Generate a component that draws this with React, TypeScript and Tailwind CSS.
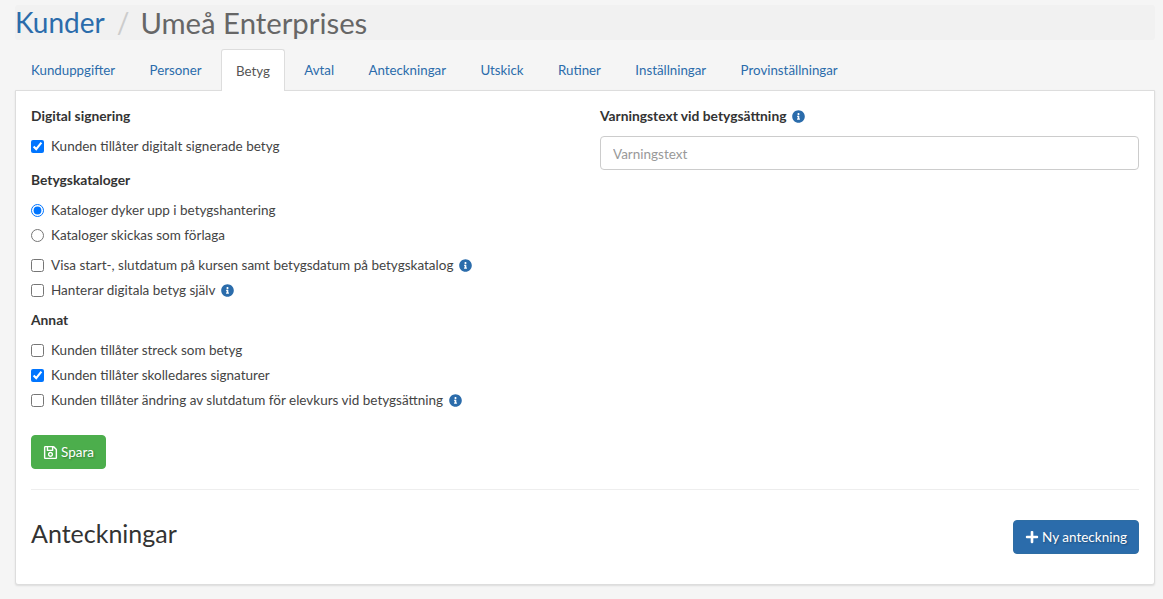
import { FaInfoCircle, FaPlus, FaRegSave } from 'react-icons/fa'

const tabs = ['Kunduppgifter', 'Personer', 'Betyg', 'Avtal', 'Anteckningar', 'Utskick', 'Rutiner', 'Inställningar', 'Provinställningar']

function Info() {
  return <FaInfoCircle className="ml-[6px] inline-block text-[13px] text-[#2b6cab]" />
}

function Check({ label, checked, info, className = '' }: { label: string; checked?: boolean; info?: boolean; className?: string }) {
  return (
    <label className={`flex h-[25px] items-center ${className}`}>
      <input type="checkbox" defaultChecked={checked} className="mr-[7px] h-[13px] w-[13px]" />
      <span>{label}</span>
      {info && <Info />}
    </label>
  )
}

function Radio({ label, checked }: { label: string; checked?: boolean }) {
  return (
    <label className="flex h-[25px] items-center">
      <input type="radio" name="kataloger" defaultChecked={checked} className="mr-[7px] h-[13px] w-[13px]" />
      <span>{label}</span>
    </label>
  )
}

function Heading({ children, className = '' }: { children: string; className?: string }) {
  return <h4 className={`text-[13.8px] leading-[20px] font-bold text-[#333] ${className}`}>{children}</h4>
}

export default function App() {
  return (
    <div className="min-h-[599px] bg-[#f5f5f5] pr-[8px] pl-[15px] pt-[5px] font-['Lato','Liberation_Sans',sans-serif] text-[13.5px] text-[#444]">
      <div className="flex h-[35px] items-center rounded-[3px] bg-[#f1f1f1] leading-[35px]">
        <a className="text-[28px] text-[#2b6cab]">Kunder</a>
        <span className="pr-[11px] pl-[12px] text-[28px] text-[#ccc]">/</span>
        <span className="text-[29.3px] text-[#666]">Umeå Enterprises</span>
      </div>
      <div className="mt-[9px] flex h-[42px] items-stretch gap-[4.4px] pl-px text-[13.3px]">
        {tabs.map(t => (
          <a
            key={t}
            className={t === 'Betyg'
              ? 'relative z-10 flex h-[42px] items-center rounded-t-[3px] border border-b-0 border-[#ddd] bg-white px-[14px] pt-[2px] text-[#555]'
              : 'flex items-center border border-transparent px-[14px] pt-[2px] text-[#2b6cab]'}
          >
            {t}
          </a>
        ))}
      </div>
      <div className="-mt-px h-[495px] rounded-b-[3px] border border-[#ddd] bg-white pr-[15px] pl-[15px] pt-[15px] shadow-[0_1px_2px_rgba(0,0,0,0.1)]">
        <div className="grid grid-cols-2 gap-x-[30px]">
          <div>
            <Heading>Digital signering</Heading>
            <Check className="mt-[8px]" label="Kunden tillåter digitalt signerade betyg" checked />
            <Heading className="mt-[11px]">Betygskataloger</Heading>
            <div className="mt-[8px]">
              <Radio label="Kataloger dyker upp i betygshantering" checked />
              <Radio label="Kataloger skickas som förlaga" />
            </div>
            <div className="mt-[5px]">
              <Check label="Visa start-, slutdatum på kursen samt betygsdatum på betygskatalog" info />
              <Check label="Hanterar digitala betyg själv" info />
            </div>
            <Heading className="mt-[7px]">Annat</Heading>
            <div className="mt-[8px]">
              <Check label="Kunden tillåter streck som betyg" />
              <Check label="Kunden tillåter skolledares signaturer" checked />
              <Check label="Kunden tillåter ändring av slutdatum för elevkurs vid betygsättning" info />
            </div>
          </div>
          <div>
            <div className="flex items-center text-[13.8px] leading-[20px] font-bold text-[#333]">
              Varningstext vid betygsättning
              <Info />
            </div>
            <input
              placeholder="Varningstext"
              className="mt-[10px] h-[34px] w-full rounded-[4px] border border-[#ccc] px-[12px] pt-[2px] text-[13.5px] outline-none placeholder:text-[#999]"
            />
          </div>
        </div>
        <button className="mt-[22px] flex h-[34px] w-[75px] items-center justify-center rounded-[4px] border border-[#4cae4c] bg-[#4cae4c] text-[13.5px] text-white [text-shadow:1px_1px_2px_rgba(0,0,0,0.3)]">
          <FaRegSave className="mr-[3px] text-[15px]" />
          Spara
        </button>
        <hr className="mt-[20px] border-[#eee]" />
        <div className="mt-[30px] flex items-center justify-between">
          <h2 className="mb-[8px] text-[25px] leading-[26px] text-[#333]">Anteckningar</h2>
          <button className="flex h-[34px] w-[126px] items-center justify-center rounded-[4px] border border-[#2e6da4] bg-[#2b6cab] text-[13.5px] text-white [text-shadow:1px_1px_2px_rgba(0,0,0,0.3)]">
            <FaPlus className="mr-[3px] text-[14px]" />
            Ny anteckning
          </button>
        </div>
      </div>
    </div>
  )
}
